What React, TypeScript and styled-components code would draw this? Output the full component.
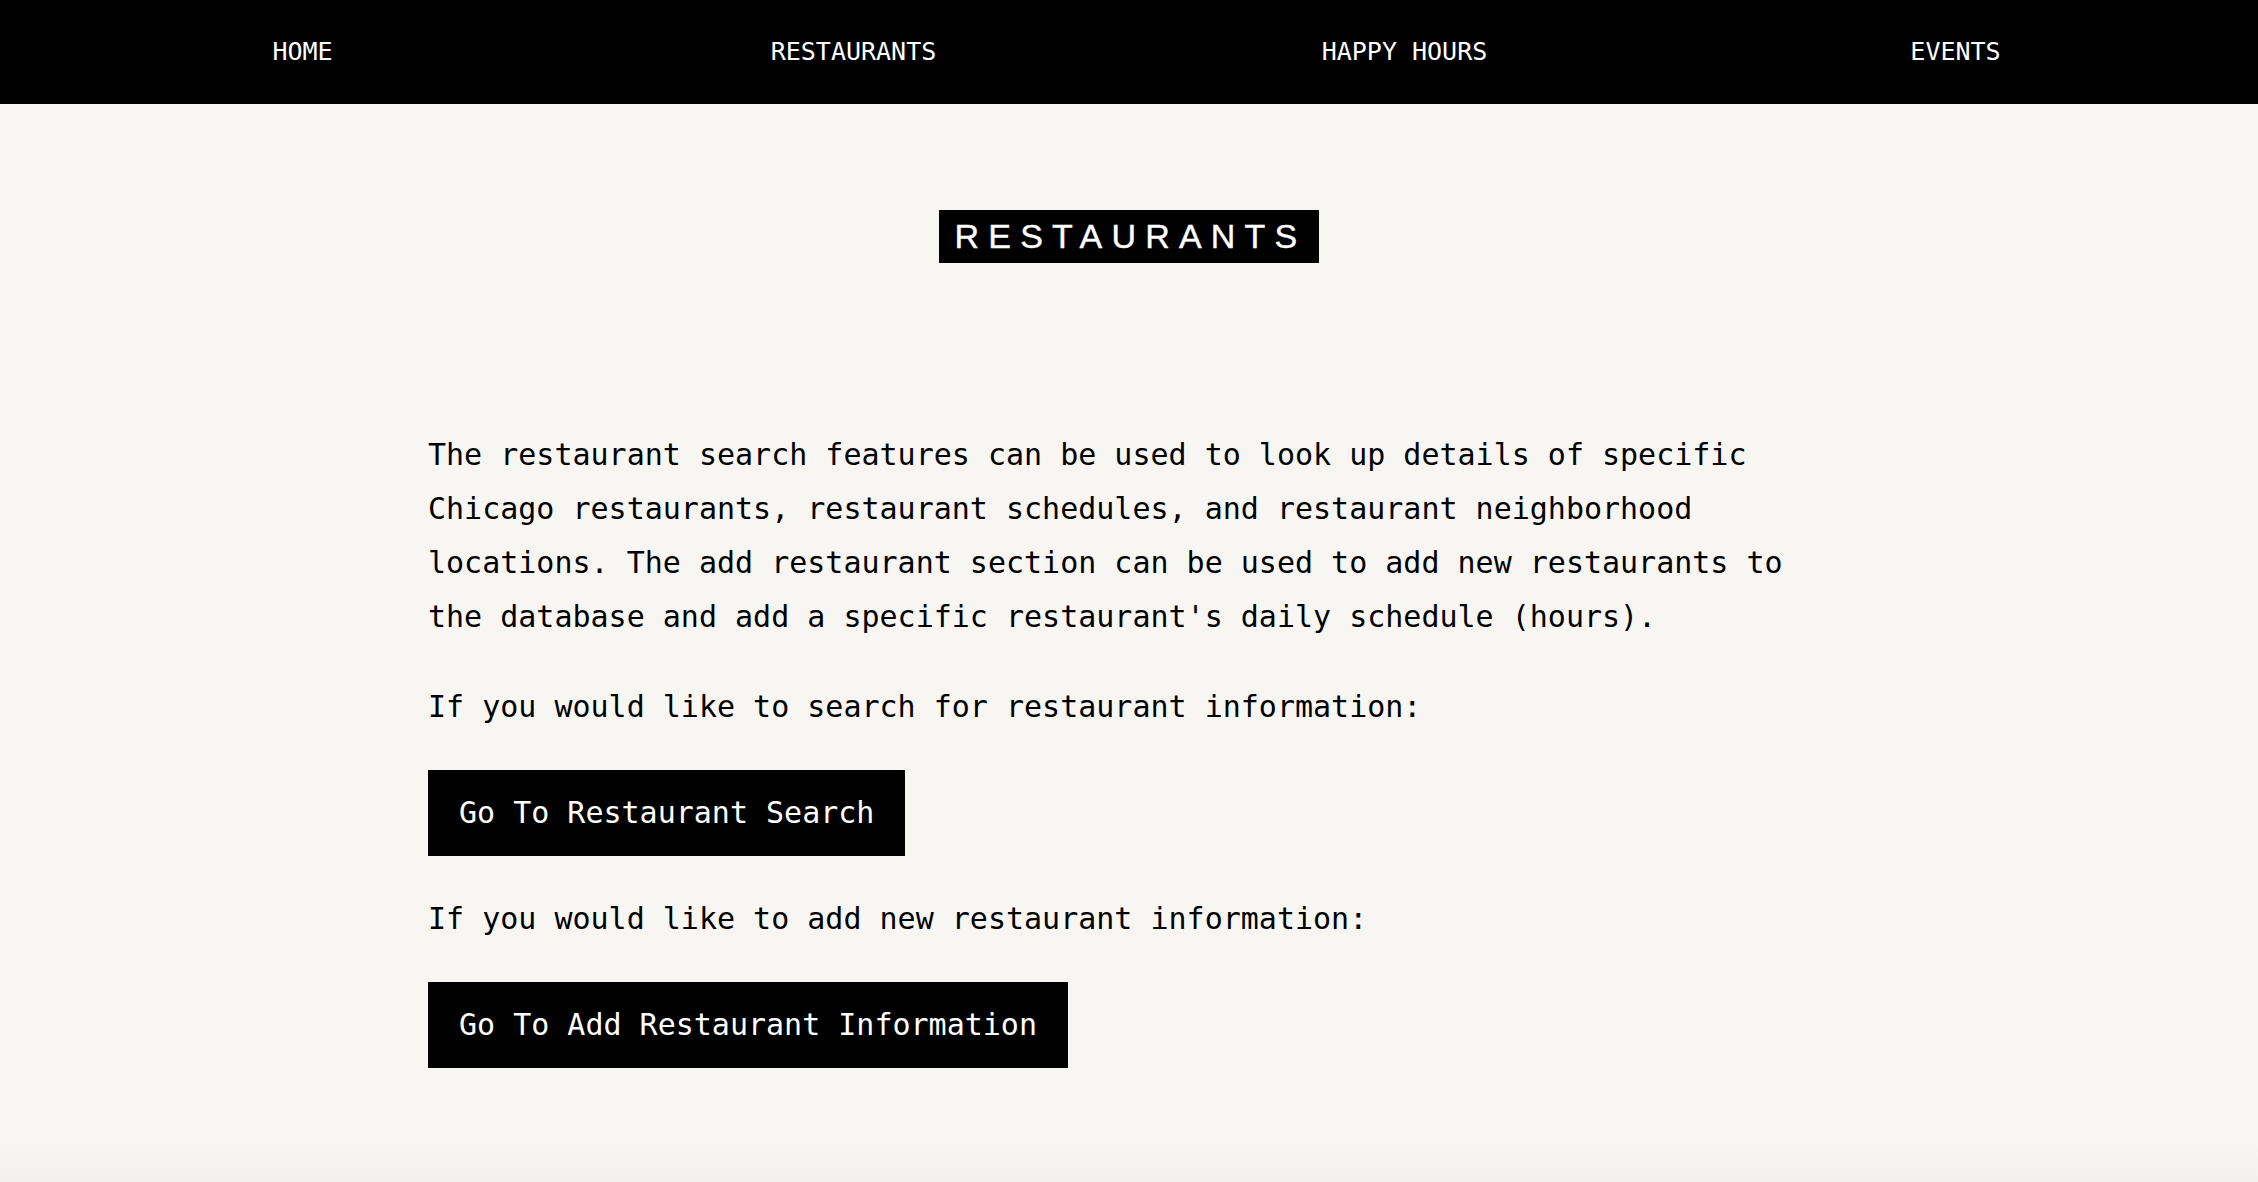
import React from "react";
import styled, { createGlobalStyle } from "styled-components";

const GlobalStyle = createGlobalStyle`
  html, body {
    margin: 0;
    padding: 0;
  }
  body {
    min-height: 100vh;
    background: linear-gradient(to bottom, #f7f6f2 0, #f7f6f2 calc(100% - 44px), #f2f1ed 100%);
    font-family: "DejaVu Sans Mono", "Liberation Mono", monospace;
    color: #000;
  }
`;

const NavBar = styled.nav`
  height: 104px;
  background: #000;
  display: grid;
  grid-template-columns: repeat(4, 1fr);
  align-items: center;
  padding: 0 27px;
  box-sizing: border-box;
`;

const NavLink = styled.a`
  justify-self: center;
  color: #fff;
  text-decoration: none;
  font-family: "DejaVu Sans Mono", monospace;
  font-size: 25px;
  line-height: 1;
  text-transform: uppercase;
  padding-bottom: 2px;
`;

const Main = styled.main`
  display: flex;
  flex-direction: column;
  align-items: center;
  padding-top: 106px;
`;

const Title = styled.h1`
  margin: 0;
  background: #000;
  color: #fff;
  font-family: "Liberation Sans", Arial, sans-serif;
  font-weight: 400;
  font-size: 34px;
  line-height: 53px;
  letter-spacing: 9.2px;
  padding: 0 13px 0 16px;
  -webkit-text-stroke: 0.4px #fff;
`;

const Content = styled.section`
  width: 1402px;
  margin-top: 165px;
  display: flex;
  flex-direction: column;
  align-items: flex-start;
  gap: 36px;
`;

const Text = styled.p`
  margin: 0;
  font-size: 30px;
  line-height: 54px;
`;

const ActionButton = styled.button`
  border: none;
  background: #000;
  color: #fff;
  font-family: "DejaVu Sans Mono", monospace;
  font-size: 30px;
  line-height: 36px;
  height: 86px;
  padding: 0 31px;
  cursor: pointer;
`;

export default function App() {
  const links = ["Home", "Restaurants", "Happy Hours", "Events"];
  return (
    <>
      <GlobalStyle />
      <NavBar>
        {links.map((l) => (
          <NavLink key={l} href="#">
            {l}
          </NavLink>
        ))}
      </NavBar>
      <Main>
        <Title>RESTAURANTS</Title>
        <Content>
          <Text>
            The restaurant search features can be used to look up details of
            specific Chicago restaurants, restaurant schedules, and restaurant
            neighborhood locations. The add restaurant section can be used to
            add new restaurants to the database and add a specific
            restaurant's daily schedule (hours).
          </Text>
          <Text>If you would like to search for restaurant information:</Text>
          <ActionButton>Go To Restaurant Search</ActionButton>
          <Text>If you would like to add new restaurant information:</Text>
          <ActionButton>Go To Add Restaurant Information</ActionButton>
        </Content>
      </Main>
    </>
  );
}
